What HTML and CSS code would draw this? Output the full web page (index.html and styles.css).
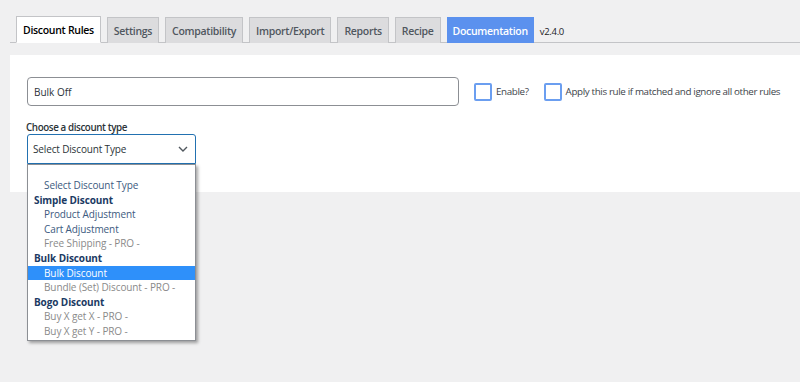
FILE: index.html
```html
<!DOCTYPE html>
<html>
<head>
<meta charset="utf-8">
<link rel="stylesheet" href="styles.css">
</head>
<body>
<div class="wrap">
  <nav class="tabs">
    <span class="tab active">Discount Rules</span>
    <span class="tab">Settings</span>
    <span class="tab">Compatibility</span>
    <span class="tab">Import/Export</span>
    <span class="tab">Reports</span>
    <span class="tab">Recipe</span>
    <span class="tab doc">Documentation</span>
    <span class="version">v2.4.0</span>
  </nav>
  <section class="panel">
    <div class="row">
      <div class="input">Bulk Off</div>
      <label class="check"><span class="box"></span>Enable?</label>
      <label class="check"><span class="box"></span>Apply this rule if matched and ignore all other rules</label>
    </div>
    <div class="field">
      <div class="label">Choose a discount type</div>
      <div class="select-wrap">
        <div class="select">Select Discount Type
          <svg class="chev" width="10" height="6" viewBox="0 0 10 6"><path d="M1 1 L5 5 L9 1" fill="none" stroke="#50575e" stroke-width="1.4"/></svg>
        </div>
        <div class="menu">
          <div class="opt blank"></div>
          <div class="opt">Select Discount Type</div>
          <div class="grp">Simple Discount</div>
          <div class="opt">Product Adjustment</div>
          <div class="opt">Cart Adjustment</div>
          <div class="opt pro">Free Shipping - PRO -</div>
          <div class="grp">Bulk Discount</div>
          <div class="opt sel">Bulk Discount</div>
          <div class="opt pro">Bundle (Set) Discount - PRO -</div>
          <div class="grp">Bogo Discount</div>
          <div class="opt pro">Buy X get X - PRO -</div>
          <div class="opt pro">Buy X get Y - PRO -</div>
        </div>
      </div>
    </div>
  </section>
</div>
</body>
</html>
```
FILE: styles.css
```css
html, body { margin: 0; padding: 0; }
body {
  background: #f0f0f1;
  font-family: "Open Sans", "Noto Sans", sans-serif;
  color: #3c434a;
  width: 800px;
  height: 382px;
  overflow: hidden;
}
.wrap { padding: 16px 0 0 10px; }
.tabs {
  display: flex;
  align-items: flex-end;
  gap: 6px;
  padding-left: 6px;
  border-bottom: 1px solid #c3c4c7;
  height: 26px;
}
.tab {
  box-sizing: border-box;
  height: 26px;
  display: flex;
  align-items: center;
  padding: 0 6px;
  font-size: 10.5px;
  font-weight: 600;
  color: #50575e;
  background: #dcdcde;
  border: 1px solid #c3c4c7;
  border-bottom: none;
  margin-bottom: -1px;
  letter-spacing: -0.3px;
}
.tab.active {
  background: #fff;
  color: #000;
  height: 27px;
  border-bottom: 1px solid #fff;
}
.tab.doc {
  background: #5b91ee;
  color: #fff;
  border-color: #5b91ee;
  padding: 0 5px;
}
.version {
  font-size: 9.5px;
  color: #1d2327;
  letter-spacing: -0.3px;
  align-self: center;
  padding-top: 5px;
}
.panel {
  background: #fff;
  margin-top: 12px;
  height: 137px;
  padding: 22px 16px 0 17px;
  box-sizing: border-box;
}
.row { display: flex; align-items: center; }
.input {
  flex: none;
  box-sizing: border-box;
  width: 432px;
  height: 29px;
  border: 1px solid #8c8f94;
  border-radius: 4px;
  font-size: 10px;
  color: #2c3338;
  padding: 0 6px;
  display: flex;
  align-items: center;
}
.check {
  display: flex;
  align-items: center;
  font-size: 9.8px;
  letter-spacing: -0.36px;
  color: #3c434a;
  margin-left: 15px;
  white-space: nowrap;
}
.check + .check { margin-left: 15px; }
.box {
  flex: none;
  box-sizing: border-box;
  width: 18px;
  height: 18px;
  border: 2px solid #6b9ef0;
  border-radius: 2px;
  margin-right: 4px;
}
.field { margin-top: 16px; }
.label {
  font-size: 9.8px;
  font-weight: 600;
  letter-spacing: -0.4px;
  color: #2c3338;
  margin-left: -1px;
  line-height: 12px;
}
.select-wrap { position: relative; width: 169px; margin-top: 0; }
.select {
  box-sizing: border-box;
  height: 30px;
  border: 1px solid #2271b1;
  border-radius: 3px 3px 0 0;
  font-size: 10px;
  letter-spacing: -0.15px;
  color: #2c3338;
  padding: 0 5px;
  display: flex;
  align-items: center;
  justify-content: space-between;
}
.chev { margin-right: 2px; }
.menu {
  position: absolute;
  left: 0;
  top: 30px;
  width: 169px;
  box-sizing: border-box;
  background: #fff;
  border: 1px solid #8c8f94;
  box-shadow: 2px 2px 3px rgba(0,0,0,0.35);
  padding: 0 0 1px;
  z-index: 2;
}
.opt, .grp {
  height: 14.6px;
  line-height: 14.6px;
  font-size: 10px;
  letter-spacing: -0.1px;
  white-space: nowrap;
}
.opt { padding-left: 16px; color: #3d5a80; }
.opt.blank { height: 13px; }
.opt.pro { color: #8a8a8a; }
.grp { padding-left: 6px; font-weight: 700; color: #1b3a63; }
.opt.sel { background: #2e90fa; color: #fff; }
```
